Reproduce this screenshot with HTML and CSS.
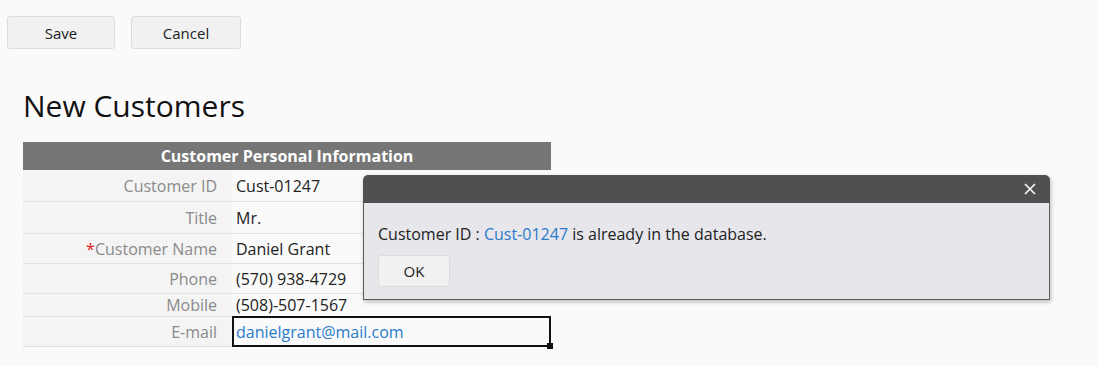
FILE: index.html
```html
<!DOCTYPE html>
<html>
<head>
<meta charset="utf-8">
<link rel="stylesheet" href="styles.css">
</head>
<body>
<div class="toolbar">
  <button class="btn save">Save</button>
  <button class="btn cancel">Cancel</button>
</div>
<h1 class="title">New Customers</h1>
<div class="form">
  <div class="form-head">Customer Personal Information</div>
  <div class="row r1"><div class="label">Customer ID</div><div class="value">Cust-01247</div></div>
  <div class="row r2"><div class="label">Title</div><div class="value">Mr.</div></div>
  <div class="row r3"><div class="label"><span class="req">*</span>Customer Name</div><div class="value">Daniel Grant</div></div>
  <div class="row r4"><div class="label">Phone</div><div class="value">(570) 938-4729</div></div>
  <div class="row r5"><div class="label">Mobile</div><div class="value">(508)-507-1567</div></div>
  <div class="row r6"><div class="label">E-mail</div><div class="value focus"><span class="link">danielgrant@mail.com</span><span class="handle"></span></div></div>
</div>

<div class="dialog">
  <div class="dialog-bar">
    <svg class="close" width="12" height="12" viewBox="0 0 12 12"><path d="M1 1L11 11M11 1L1 11" stroke="#fff" stroke-width="1.6" fill="none"/></svg>
  </div>
  <div class="dialog-body">
    <p class="msg">Customer ID : <span class="link">Cust-01247</span> is already in the database.</p>
    <button class="btn ok">OK</button>
  </div>
</div>
</body>
</html>
```

FILE: styles.css
```css
html, body {
  margin: 0;
  padding: 0;
  background: #fafafa;
  font-family: "Open Sans", "Liberation Sans", sans-serif;
  color: #222;
}
body {
  position: relative;
  width: 1098px;
  height: 366px;
  overflow: hidden;
}
.toolbar {
  display: flex;
  gap: 16px;
  padding: 16px 7px 0;
}
.btn {
  height: 33px;
  background: #f1f1f1;
  border: 1px solid #dcdcdc;
  border-radius: 3px;
  font-family: "Open Sans", sans-serif;
  font-size: 15px;
  color: #222;
  padding: 0;
}
.save { width: 108px; }
.cancel { width: 110px; }
.title {
  margin: 39px 0 0 23px;
  font-size: 30px;
  font-weight: 400;
  line-height: 36px;
  color: #111;
}
.form {
  margin: 18px 0 0 23px;
  width: 528px;
}
.form-head {
  height: 28px;
  line-height: 28px;
  background: #767676;
  color: #fff;
  font-weight: 700;
  font-size: 16px;
  text-align: center;
}
.row {
  display: grid;
  grid-template-columns: 209px 1fr;
  border-bottom: 1px solid #e2e2e2;
  font-size: 16px;
}
.r1 { height: 31px; }
.r2 { height: 31px; }
.r3 { height: 29px; }
.r4 { height: 29px; }
.r5 { height: 22px; }
.r6 { height: 29px; }
.label {
  background: #f4f4f4;
  color: #8a8a8a;
  padding-right: 15px;
  display: flex;
  align-items: center;
  justify-content: flex-end;
}
.req { color: #e02020; }
.value {
  display: flex;
  align-items: center;
  padding-left: 4px;
  color: #222;
}
.value.focus {
  position: relative;
  border: 2px solid #111;
  margin-top: -1px;
  margin-bottom: -1px;
  padding-left: 2px;
}
.handle {
  position: absolute;
  right: -4px;
  bottom: -4px;
  width: 6px;
  height: 6px;
  background: #111;
}
.link { color: #2b7bcc; }
.dialog {
  position: absolute;
  left: 363px;
  top: 175px;
  width: 687px;
  box-shadow: 1px 2px 4px rgba(0,0,0,0.25);
  border-radius: 5px 5px 0 0;
}
.dialog-bar {
  height: 28px;
  background: #505050;
  border-radius: 5px 5px 0 0;
  display: flex;
  align-items: center;
  justify-content: flex-end;
  padding-right: 14px;
}
.close { display: block; }
.dialog-body {
  background: #e7e6eb;
  border: 1px solid #5a5a5a;
  border-top: none;
  height: 96px;
  padding: 0 14px;
}
.msg {
  margin: 0;
  padding-top: 20px;
  font-size: 16px;
  line-height: 22px;
  color: #222;
}
.ok {
  margin-top: 10px;
  width: 72px;
  height: 32px;
  font-size: 15px;
}
```
